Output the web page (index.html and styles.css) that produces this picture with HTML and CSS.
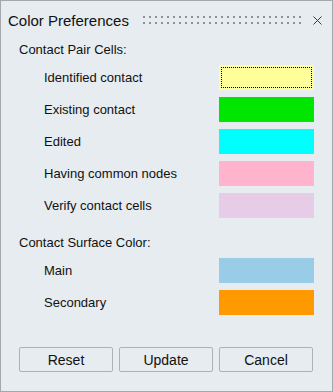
FILE: index.html
```html
<!DOCTYPE html>
<html lang="en">
<head>
  <meta charset="UTF-8">
  <title>Color Preferences</title>
  <link rel="stylesheet" href="styles.css">
</head>
<body>
  <div class="dialog">
    <div class="title-bar">
      <span class="title">Color Preferences</span>
      <svg class="grip" width="160" height="8">
        <defs>
          <pattern id="dots" width="6" height="6" patternUnits="userSpaceOnUse">
            <rect width="2" height="2" fill="#8d9296"/>
          </pattern>
        </defs>
        <rect width="160" height="8" fill="url(#dots)"/>
      </svg>
      <svg class="close" width="9" height="9" viewBox="0 0 9 9">
        <path d="M0.5 0.5 L8.5 8.5 M8.5 0.5 L0.5 8.5" stroke="#3a3a3a" stroke-width="1"/>
      </svg>
    </div>

    <div class="content">
      <div class="section-label">Contact Pair Cells:</div>
      <div class="rows">
        <div class="row">
          <span>Identified contact</span>
          <div class="swatch focused" style="background-color: #ffff99;"></div>
        </div>
        <div class="row">
          <span>Existing contact</span>
          <div class="swatch" style="background-color: #00e600;"></div>
        </div>
        <div class="row">
          <span>Edited</span>
          <div class="swatch" style="background-color: #00ffff;"></div>
        </div>
        <div class="row">
          <span>Having common nodes</span>
          <div class="swatch" style="background-color: #ffb3cc;"></div>
        </div>
        <div class="row">
          <span>Verify contact cells</span>
          <div class="swatch" style="background-color: #e6cce6;"></div>
        </div>
      </div>

      <div class="section-label second">Contact Surface Color:</div>
      <div class="rows">
        <div class="row">
          <span>Main</span>
          <div class="swatch" style="background-color: #99cce6;"></div>
        </div>
        <div class="row">
          <span>Secondary</span>
          <div class="swatch" style="background-color: #ff9900;"></div>
        </div>
      </div>

      <div class="button-group">
        <button type="button">Reset</button>
        <button type="button">Update</button>
        <button type="button">Cancel</button>
      </div>
    </div>
  </div>
</body>
</html>
```

FILE: styles.css
```css
body {
  margin: 0;
  font-family: 'Liberation Sans', Arial, sans-serif;
  background-color: #e6ecf0;
}

.dialog {
  width: 333px;
  height: 392px;
  box-sizing: border-box;
  border: 1px solid #a4a8ac;
  background-color: #e6ecf0;
  color: #111;
}

.title-bar {
  display: flex;
  align-items: center;
  height: 38px;
  padding: 0 10px 0 7px;
}

.title {
  font-size: 15px;
}

.grip {
  display: block;
  margin-left: 14px;
}

.close {
  display: block;
  margin-left: auto;
}

.content {
  padding: 0 18px 0 18px;
}

.section-label {
  font-size: 13px;
  line-height: 18px;
  margin-top: 2px;
  margin-bottom: 6px;
}

.section-label.second {
  margin-top: 16px;
}

.rows {
  display: flex;
  flex-direction: column;
  gap: 7px;
}

.row {
  display: flex;
  align-items: center;
  justify-content: space-between;
  height: 25px;
  padding-left: 25px;
  font-size: 13px;
}

.swatch {
  width: 95px;
  height: 25px;
}

.swatch.focused {
  outline: 1px dotted #000;
  outline-offset: -3px;
}

.button-group {
  display: flex;
  gap: 6px;
  margin-top: 32px;
}

.button-group button {
  width: 94px;
  height: 25px;
  padding: 0;
  border: 1px solid #aeb2b5;
  border-radius: 2px;
  background-color: #e6ecf0;
  font-family: 'Liberation Sans', Arial, sans-serif;
  font-size: 14px;
  color: #111;
}
```
